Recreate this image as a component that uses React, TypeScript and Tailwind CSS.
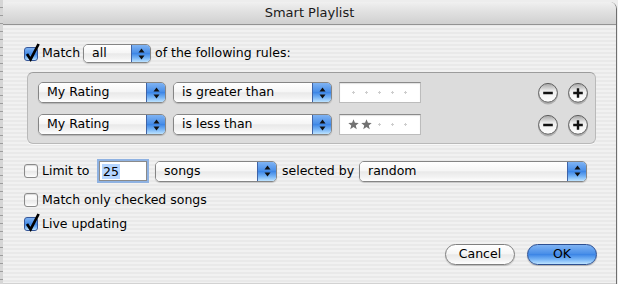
import React from "react";

const gel =
  "bg-[image:linear-gradient(180deg,#7fb3f3_0%,#4a8fe8_45%,#3d86e6_50%,#74b2f5_75%,#bde3ff_100%)]";
const white =
  "bg-[image:linear-gradient(180deg,#ffffff_0%,#f6f6f6_45%,#e9e9e9_52%,#f3f3f3_80%,#ffffff_100%)]";

function Arrows() {
  return (
    <svg width="7" height="12" viewBox="0 0 7 12">
      <polygon points="3.5,0.5 6.5,4.5 0.5,4.5" fill="#111" />
      <polygon points="0.5,7.5 6.5,7.5 3.5,11.5" fill="#111" />
    </svg>
  );
}

function Popup({ label, w, h = 21 }: { label: string; w: string; h?: number }) {
  return (
    <div
      className={`flex ${w} shrink-0 rounded-[5px] border border-[#858585] overflow-hidden shadow-[0_1px_1px_rgba(0,0,0,0.18)]`}
      style={{ height: h }}
    >
      <div className={`flex-1 flex items-center pl-[8px] ${white}`}>{label}</div>
      <div className={`w-[19px] flex items-center justify-center border-l border-[#3f63a6] ${gel}`}>
        <Arrows />
      </div>
    </div>
  );
}

function Check({ checked }: { checked?: boolean }) {
  if (!checked)
    return (
      <span
        className={`block w-[14px] h-[14px] shrink-0 rounded-[3px] border border-[#8a8a8a] ${white} shadow-[inset_0_1px_1px_rgba(0,0,0,0.15)]`}
      />
    );
  return (
    <span
      className={`relative block w-[14px] h-[14px] shrink-0 rounded-[3px] border border-[#37589a] ${gel}`}
    >
      <svg className="absolute left-[0px] top-[-5px] overflow-visible" width="15" height="19" viewBox="0 0 15 19">
        <path d="M2 11 L5.6 16.4 L13.6 1" fill="none" stroke="#000" strokeWidth="2.7" strokeLinejoin="miter" />
      </svg>
    </span>
  );
}

function Round({ plus }: { plus?: boolean }) {
  return (
    <svg width="22" height="23" viewBox="0 0 22 23" className="shrink-0">
      <defs>
        <linearGradient id="rb" x1="0" y1="0" x2="0" y2="1">
          <stop offset="0" stopColor="#a2a2a2" />
          <stop offset="0.4" stopColor="#eeeeee" />
          <stop offset="1" stopColor="#ffffff" />
        </linearGradient>
      </defs>
      <circle cx="11" cy="12.4" r="10" fill="rgba(0,0,0,0.2)" />
      <circle cx="11" cy="10.8" r="9.4" fill="url(#rb)" stroke="#5f5f5f" strokeWidth="1" />
      <path d="M6.2 11h9.6" stroke="#111" strokeWidth="2.4" />
      {plus && <path d="M11 6.2v9.6" stroke="#111" strokeWidth="2.4" />}
    </svg>
  );
}

function Star() {
  return (
    <svg width="11" height="11" viewBox="0 0 20 20">
      <polygon
        points="10,0.5 12.6,7 19.5,7.3 14.1,11.7 16,18.6 10,14.7 4,18.6 5.9,11.7 0.5,7.3 7.4,7"
        fill="#727272"
      />
    </svg>
  );
}

function Dot() {
  return (
    <svg width="5" height="5" viewBox="0 0 5 5">
      <path d="M2.5 1v3M1 2.5h3" stroke="#cdcdcd" strokeWidth="1" />
    </svg>
  );
}

function Rating({ stars }: { stars: number }) {
  return (
    <div className="w-[82px] h-[21px] shrink-0 flex items-center pl-[7px] bg-white border border-[#bcbcbc] border-t-[#8a8a8a] shadow-[inset_0_1px_1px_rgba(0,0,0,0.12)]">
      {[0, 1, 2, 3, 4].map((i) => (
        <span key={i} className="w-[13px] flex items-center justify-center">
          {i < stars ? <Star /> : <Dot />}
        </span>
      ))}
    </div>
  );
}

function RuleRow({ op, stars }: { op: string; stars: number }) {
  return (
    <div className="flex items-center h-[21px]">
      <Popup label="My Rating" w="w-[128px]" />
      <div className="ml-[7px]">
        <Popup label={op} w="w-[159px]" />
      </div>
      <div className="ml-[7px]">
        <Rating stars={stars} />
      </div>
      <div className="flex-1" />
      <div className="flex items-center gap-[8px] pt-[1px]">
        <Round />
        <Round plus />
      </div>
    </div>
  );
}

export default function App() {
  return (
    <div className="w-[618px] h-[284px] flex bg-[#ededed] overflow-hidden font-['DejaVu_Sans',sans-serif] text-[12.5px] text-black">
      <div className="w-[3px] shrink-0 bg-[image:repeating-linear-gradient(180deg,#d6d6d6_0px,#d6d6d6_7px,#9d9d9d_7px,#9d9d9d_8px)]" />
      <div className="w-[614px] shrink-0 mt-[2px] flex flex-col rounded-t-[7px] border-r border-[#6f6f6f] overflow-hidden bg-[image:repeating-linear-gradient(180deg,#f1f1f1_0px,#f1f1f1_2px,#e9e9e9_2px,#e9e9e9_4px)]">
        <div className="h-[23px] shrink-0 flex items-center justify-center border-b border-[#939393] bg-[image:linear-gradient(180deg,#f0f0f0_0%,#e2e2e2_40%,#d0d0d0_100%)] text-[#1a1a1a] text-[13px]">
          Smart Playlist
        </div>

        <div className="flex-1 flex flex-col pl-[21px] pr-[19px] pt-[19px]">
          <div className="flex items-center h-[19px]">
            <Check checked />
            <span className="ml-[4px] w-[41px]">Match</span>
            <Popup label="all" w="w-[68px]" h={19} />
            <span className="ml-[4px]">of the following rules:</span>
          </div>

          <div className="ml-[3px] mt-[9px] w-[569px] h-[72px] flex flex-col gap-[11px] pt-[9px] pl-[10px] pr-[6px] rounded-[6px] border border-[#b9b9b9] border-t-[#9c9c9c] bg-[#dcdcdc] shadow-[0_1px_0_rgba(255,255,255,0.7)]">
            <RuleRow op="is greater than" stars={0} />
            <RuleRow op="is less than" stars={2} />
          </div>

          <div className="flex items-center h-[22px] mt-[16px]">
            <Check />
            <span className="ml-[4px] w-[57px]">Limit to</span>
            <div className="w-[48px] h-[20px] shrink-0 flex items-center pl-[2px] bg-white border border-[#8a8a8a] shadow-[0_0_0_2px_#8fb2e2]">
              <span className="bg-[#b5d5ff] px-[1px] leading-[15px]">25</span>
            </div>
            <div className="ml-[8px]">
              <Popup label="songs" w="w-[122px]" />
            </div>
            <span className="ml-[5px] w-[77px]">selected by</span>
            <Popup label="random" w="w-[228px]" />
          </div>

          <div className="flex items-center h-[14px] mt-[11px]">
            <Check />
            <span className="ml-[4px]">Match only checked songs</span>
          </div>

          <div className="flex items-center h-[14px] mt-[10px]">
            <Check checked />
            <span className="ml-[4px]">Live updating</span>
          </div>

          <div className="flex justify-end gap-[12px] mt-[13px]">
            <button className={`w-[70px] h-[21px] rounded-full border border-[#7f7f7f] ${white} shadow-[0_1px_1px_rgba(0,0,0,0.2)] flex items-center justify-center`}>
              Cancel
            </button>
            <button className={`w-[70px] h-[21px] rounded-full border border-[#2d4f90] ${gel} shadow-[0_1px_1px_rgba(0,0,0,0.25)] flex items-center justify-center`}>
              OK
            </button>
          </div>
        </div>
        <div className="h-[1px] bg-[#d2d2d2]" />
      </div>
    </div>
  );
}
